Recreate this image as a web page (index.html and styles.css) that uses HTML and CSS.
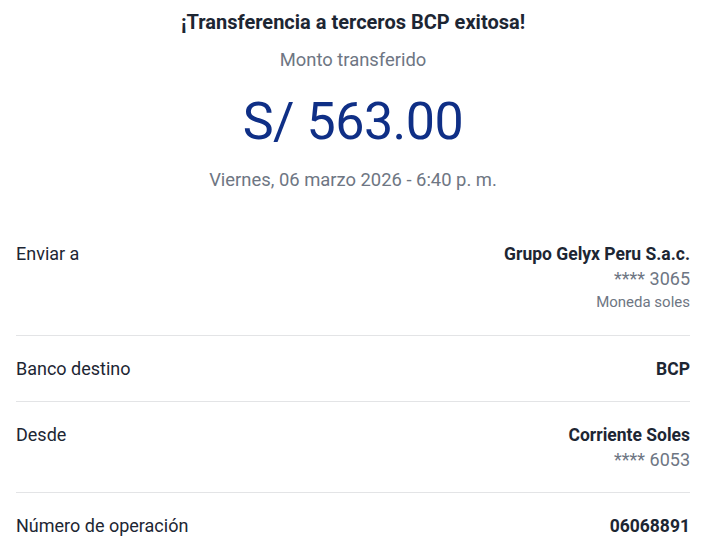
FILE: index.html
```html
<!DOCTYPE html>
<html lang="es">
<head>
<meta charset="utf-8">
<link rel="stylesheet" href="styles.css">
</head>
<body>
<main class="receipt">
  <header class="summary">
    <h1 class="title">¡Transferencia a terceros BCP exitosa!</h1>
    <p class="caption">Monto transferido</p>
    <p class="amount">S/ 563.00</p>
    <p class="date">Viernes, 06 marzo 2026 - 6:40 p. m.</p>
  </header>
  <section class="details">
    <div class="row row-tall">
      <span class="label">Enviar a</span>
      <div class="value">
        <span class="strong">Grupo Gelyx Peru S.a.c.</span>
        <span class="sub">**** 3065</span>
        <span class="small">Moneda soles</span>
      </div>
    </div>
    <div class="row">
      <span class="label">Banco destino</span>
      <div class="value"><span class="strong">BCP</span></div>
    </div>
    <div class="row">
      <span class="label">Desde</span>
      <div class="value">
        <span class="strong">Corriente Soles</span>
        <span class="sub">**** 6053</span>
      </div>
    </div>
    <div class="row">
      <span class="label">Número de operación</span>
      <div class="value"><span class="strong">06068891</span></div>
    </div>
  </section>
</main>
</body>
</html>
```

FILE: styles.css
```css
* { box-sizing: border-box; }
html, body { margin: 0; padding: 0; background: #ffffff; }
body {
  font-family: Roboto, "Liberation Sans", sans-serif;
  color: #1d2633;
}
.receipt { padding: 0 16px; }
.summary {
  display: flex;
  flex-direction: column;
  align-items: center;
  padding-top: 10px;
}
.title {
  margin: 0;
  font-size: 20px;
  font-weight: 700;
  line-height: 24px;
  color: #1d2633;
}
.caption {
  margin: 14px 0 0;
  font-size: 18.4px;
  line-height: 24px;
  color: #6e7683;
}
.amount {
  margin: 20px 0 0;
  font-size: 52px;
  line-height: 60px;
  color: #0f2f86;
  letter-spacing: -0.5px;
}
.date {
  margin: 16px 0 0;
  font-size: 18.4px;
  line-height: 24px;
  color: #6e7683;
}
.details { margin-top: 29px; }
.row {
  display: flex;
  justify-content: space-between;
  align-items: flex-start;
  padding: 21px 0 20px;
  border-top: 1px solid #e3e4e6;
}
.row:first-child { border-top: none; }
.row-tall { padding-bottom: 22px; }
.label {
  font-size: 18px;
  line-height: 24px;
  color: #1d2633;
}
.value {
  display: flex;
  flex-direction: column;
  align-items: flex-end;
}
.strong {
  font-size: 17.5px;
  line-height: 24px;
  font-weight: 700;
  color: #1d2633;
}
.sub {
  font-size: 18px;
  line-height: 25px;
  color: #6e7683;
}
.small {
  font-size: 15px;
  line-height: 22px;
  color: #6e7683;
}
```
